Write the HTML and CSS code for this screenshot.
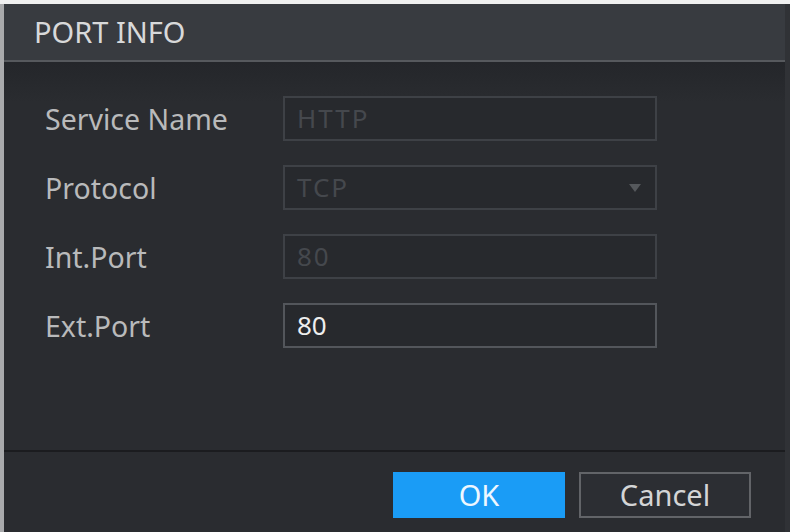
FILE: index.html
```html
<!DOCTYPE html>
<html>
<head>
<meta charset="utf-8">
<link rel="stylesheet" href="styles.css">
</head>
<body>
<div class="dialog">
  <div class="header">PORT INFO</div>
  <div class="content">
    <div class="row">
      <div class="label">Service Name</div>
      <div class="field disabled">HTTP</div>
    </div>
    <div class="row">
      <div class="label">Protocol</div>
      <div class="field disabled select"><span>TCP</span><span class="arrow"></span></div>
    </div>
    <div class="row">
      <div class="label">Int.Port</div>
      <div class="field disabled">80</div>
    </div>
    <div class="row">
      <div class="label">Ext.Port</div>
      <div class="field active">80</div>
    </div>
  </div>
  <div class="footer">
    <button class="btn ok">OK</button>
    <button class="btn cancel">Cancel</button>
  </div>
</div>
</body>
</html>
```

FILE: styles.css
```css
html, body {
  margin: 0;
  padding: 0;
}
body {
  background: #f0f0f0;
  width: 790px;
  height: 532px;
  overflow: hidden;
  font-family: "Noto Sans", "Open Sans", sans-serif;
}
.dialog {
  margin-top: 4px;
  height: 528px;
  width: 781px;
  border-left: 4px solid #a9aaac;
  border-right: 5px solid #303236;
  background: #2a2c30;
  display: flex;
  flex-direction: column;
}
.header {
  height: 56px;
  background: #383b40;
  border-bottom: 2px solid #56595d;
  color: #d8d9da;
  font-size: 29px;
  line-height: 56px;
  padding-left: 30px;
}
.content {
  flex: 1;
  padding: 34px 0 0 41px;
  display: flex;
  flex-direction: column;
  gap: 24px;
  background: linear-gradient(#24262a, #2a2c30 40px);
}
.row {
  display: flex;
  align-items: center;
  height: 45px;
}
.label {
  width: 238px;
  color: #b9babb;
  font-size: 28.5px;
}
.field {
  box-sizing: border-box;
  width: 374px;
  height: 45px;
  border: 2px solid #3e4146;
  background: #27292d;
  padding-left: 12px;
  font-size: 26px;
  line-height: 41px;
  display: flex;
  align-items: center;
}
.field.disabled {
  color: #45484d;
  letter-spacing: 2px;
}
.field.active {
  border-color: #53565b;
  color: #eeeeee;
}
.select {
  justify-content: space-between;
  padding-right: 14px;
}
.arrow {
  width: 0;
  height: 0;
  border-left: 6px solid transparent;
  border-right: 6px solid transparent;
  border-top: 8px solid #55585c;
}
.footer {
  height: 82px;
  border-top: 2px solid #1b1c1f;
  display: flex;
  justify-content: flex-end;
  align-items: flex-start;
  padding: 20px 34px 0 0;
  gap: 14px;
  box-sizing: border-box;
}
.btn {
  width: 172px;
  height: 46px;
  font-family: "Noto Sans", "Open Sans", sans-serif;
  font-size: 29px;
  line-height: 42px;
  padding: 0;
  cursor: pointer;
}
.ok {
  background: #1a9cf6;
  border: none;
  color: #eef7ff;
}
.cancel {
  background: #2c2e33;
  border: 2px solid #626468;
  color: #d4d5d6;
}
```
